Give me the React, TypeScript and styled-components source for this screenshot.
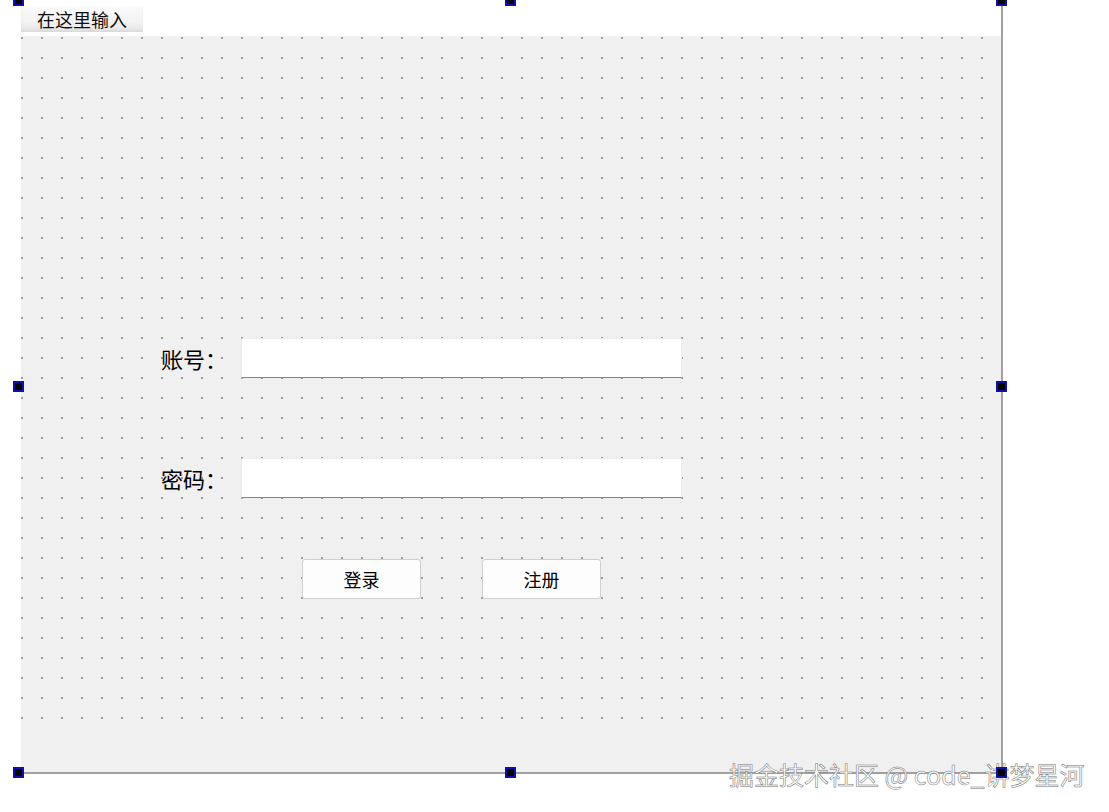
import React from "react";
import styled, { createGlobalStyle } from "styled-components";

const GlobalStyle = createGlobalStyle`
  html, body {
    margin: 0;
    padding: 0;
    background: #ffffff;
  }
  body {
    font-family: "Noto Sans CJK SC", "Noto Sans", sans-serif;
    color: #000;
  }
`;

const Page = styled.div`
  position: relative;
  width: 1109px;
  height: 812px;
  overflow: hidden;
  background: #fff;
`;

const Form = styled.div`
  position: relative;
  margin-left: 21px;
  width: 980px;
  height: 772px;
  border-right: 2px solid #a0a0a0;
  border-bottom: 2px solid #a0a0a0;
  display: flex;
  flex-direction: column;
`;

const MenuBar = styled.div`
  height: 36px;
  background: #fff;
  display: flex;
  align-items: flex-start;
  padding-top: 6px;
  box-sizing: border-box;
`;

const MenuItem = styled.div`
  width: 122px;
  height: 26px;
  box-sizing: border-box;
  padding-left: 16px;
  font-size: 18px;
  line-height: 26px;
  color: #111;
  background: linear-gradient(#fbfbfb 0%, #f3f3f3 60%, #e4e4e4 100%);
  box-shadow: inset 0 -2px 3px rgba(0, 0, 0, 0.05);
`;

const Central = styled.div`
  flex: 1;
  background-color: #f0f0f0;
  background-image: radial-gradient(circle at 1px 1px, #9c9c9c 0.9px, transparent 1.1px);
  background-size: 20px 20px;
  background-position: 0 1px;
  padding: 302px 0 0 140px;
  box-sizing: border-box;
  display: flex;
  flex-direction: column;
`;

const StatusBar = styled.div`
  height: 42px;
  background: #f0f0f0;
`;

const Field = styled.div<{ $gap?: number }>`
  display: grid;
  grid-template-columns: 80px 441px;
  align-items: center;
  height: 40px;
  margin-bottom: ${(p) => p.$gap ?? 0}px;
`;

const Label = styled.label`
  font-size: 22px;
  color: #000;
  line-height: 1;
`;

const Input = styled.input`
  height: 40px;
  box-sizing: border-box;
  border: 1px solid #ececec;
  border-bottom: 1px solid #858585;
  border-radius: 2px 2px 0 0;
  background: #fff;
  outline: none;
  font-size: 16px;
  padding: 0 8px;
`;

const Buttons = styled.div`
  display: flex;
  gap: 61px;
  margin-top: 61px;
  padding-left: 141px;
`;

const Button = styled.button`
  width: 119px;
  height: 40px;
  box-sizing: border-box;
  border: 1px solid #d0d0d0;
  border-radius: 3px;
  background: #fdfdfd;
  font-family: "Noto Sans CJK SC", "Noto Sans", sans-serif;
  font-size: 18px;
  color: #000;
  padding: 0;
`;

const Handle = styled.div<{ $x: number; $y: number }>`
  position: absolute;
  left: ${(p) => p.$x}px;
  top: ${(p) => p.$y}px;
  width: 11px;
  height: 11px;
  box-sizing: border-box;
  background: #000;
  border: 2px solid #1010a8;
  z-index: 3;
`;

const Watermark = styled.div`
  position: absolute;
  left: 729px;
  top: 762px;
  font-size: 25px;
  line-height: 1;
  white-space: nowrap;
  color: #ffffff;
  -webkit-text-stroke: 0.5px #7a7a7a;
  text-shadow: 0 0 1px rgba(0, 0, 0, 0.2);
  z-index: 2;
`;

const handleSpots = [
  [-8, -5],
  [484, -5],
  [975, -5],
  [-8, 381],
  [975, 381],
  [-8, 767],
  [484, 767],
  [975, 767],
];

export default function App() {
  return (
    <Page>
      <GlobalStyle />
      <Form>
        <MenuBar>
          <MenuItem>在这里输入</MenuItem>
        </MenuBar>
        <Central>
          <Field $gap={80}>
            <Label>账号：</Label>
            <Input />
          </Field>
          <Field>
            <Label>密码：</Label>
            <Input type="password" />
          </Field>
          <Buttons>
            <Button>登录</Button>
            <Button>注册</Button>
          </Buttons>
        </Central>
        <StatusBar />
        {handleSpots.map(([x, y], i) => (
          <Handle key={i} $x={x} $y={y} />
        ))}
      </Form>
      <Watermark>掘金技术社区 @ code_讲梦星河</Watermark>
    </Page>
  );
}
